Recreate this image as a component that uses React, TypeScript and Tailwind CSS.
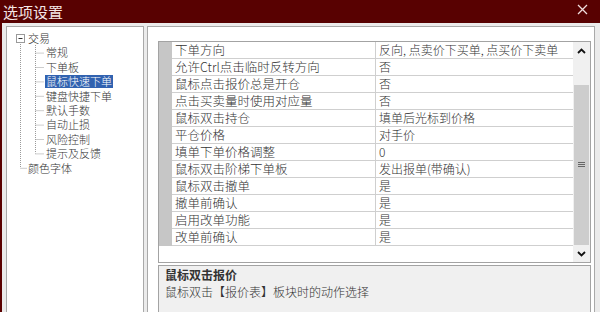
import React from 'react';

const rows: [string, string][] = [
  ['下单方向', '反向, 点卖价下买单, 点买价下卖单'],
  ['允许Ctrl点击临时反转方向', '否'],
  ['鼠标点击报价总是开仓', '否'],
  ['点击买卖量时使用对应量', '否'],
  ['鼠标双击持仓', '填单后光标到价格'],
  ['平仓价格', '对手价'],
  ['填单下单价格调整', '0'],
  ['鼠标双击阶梯下单板', '发出报单(带确认)'],
  ['鼠标双击撤单', '是'],
  ['撤单前确认', '是'],
  ['启用改单功能', '是'],
  ['改单前确认', '是'],
];

const children = ['常规', '下单板', '鼠标快速下单', '键盘快捷下单', '默认手数', '自动止损', '风险控制', '提示及反馈'];

const Chevron: React.FC<{ up?: boolean }> = ({ up }) => (
  <svg width="9" height="6" viewBox="0 0 9 6">
    <polyline
      points={up ? '1,5 4.5,1.5 8,5' : '1,1 4.5,4.5 8,1'}
      fill="none"
      stroke="#111"
      strokeWidth="1.8"
    />
  </svg>
);

const TreeLines = () => {
  const c = (i: number) => 11.2 + 14.4 * i;
  return (
    <svg className="absolute left-0 top-0 pointer-events-none" width="136" height="160">
      <g stroke="#9a9a9a" strokeWidth="1" strokeDasharray="1 1" fill="none">
        <line x1="13.5" y1="15" x2="13.5" y2={c(9)} />
        <line x1="13.5" y1={c(9) + 0.5} x2="20" y2={c(9) + 0.5} />
        <line x1="28.5" y1="18" x2="28.5" y2={c(8)} />
        {children.map((_, i) => (
          <line key={i} x1="28.5" y1={c(i + 1) + 0.5} x2="37" y2={c(i + 1) + 0.5} />
        ))}
      </g>
      <rect x="9.5" y="7.5" width="8" height="8" fill="#fff" stroke="#9a9a9a" />
      <line x1="11.5" y1="11.5" x2="15.5" y2="11.5" stroke="#333" />
    </svg>
  );
};

export default function App() {
  return (
    <div className="w-[600px] h-[312px] overflow-hidden flex flex-col bg-[#ebebeb] border-l-2 border-[#5a0000] font-['Noto_Sans_CJK_SC',sans-serif] font-light text-[#333]">
      {/* title bar */}
      <div className="h-[23px] shrink-0 bg-[#580101] flex items-center justify-between pl-[1px] pr-[12px]">
        <span className="text-[15px] leading-[23px] text-[#f4e6e6] font-normal">选项设置</span>
        <svg width="11" height="11" viewBox="0 0 11 11" className="-mt-[5px]">
          <path d="M1 1 L10 10 M10 1 L1 10" stroke="#f0dede" strokeWidth="1.3" />
        </svg>
      </div>

      <div className="flex-1 min-h-0 flex pt-[3px] pl-[4px] pr-[5px] gap-[3px]">
        {/* tree */}
        <div className="w-[138px] shrink-0 bg-white border border-b-0 border-[#a9a9a9] relative pt-[4px] text-[11px]">
          <TreeLines />
          <div className="h-[14.4px] leading-[14.4px] pl-[21px]">交易</div>
          {children.map((t) => (
            <div key={t} className="h-[14.4px] leading-[14.4px] pl-[38px]">
              {t === '鼠标快速下单' ? (
                <span className="inline-block bg-[#3162b0] text-white px-[1px] leading-[13px]">{t}</span>
              ) : (
                <span className="px-[1px]">{t}</span>
              )}
            </div>
          ))}
          <div className="h-[14.4px] leading-[14.4px] pl-[21px]">颜色字体</div>
        </div>

        {/* right panel */}
        <div className="flex-1 bg-white border border-b-0 border-[#a9a9a9] pl-[10px] pr-[3px] pt-[14px] flex flex-col">
          <div className="h-[222px] shrink-0 border border-[#a3a3a3] flex text-[12.5px]">
            <div className="flex-1 flex flex-col">
              {rows.map(([k, v]) => (
                <div key={k} className="h-[17px] flex">
                  <div className="w-[13px] bg-[#c6c6c6]" />
                  <div className="w-[204px] border-b border-r border-[#cfcfcf] pl-[3px] leading-[16px] whitespace-nowrap">
                    {k}
                  </div>
                  <div className="flex-1 border-b border-[#cfcfcf] pl-[3px] leading-[16px] whitespace-nowrap text-[12px]">
                    {v}
                  </div>
                </div>
              ))}
            </div>
            <div className="w-[17px] bg-[#f0f0f0] flex flex-col">
              <div className="h-[17px] flex items-center justify-center">
                <Chevron up />
              </div>
              <div className="h-[26px]" />
              <div className="h-[160px] mx-[1px] bg-[#cdcdcd] flex items-center justify-center">
                <svg width="7" height="6" viewBox="0 0 7 6">
                  <path d="M0 0.5 H7 M0 2.5 H7 M0 4.5 H7" stroke="#666" strokeWidth="1" />
                </svg>
              </div>
              <div className="h-[17px] flex items-center justify-center">
                <Chevron />
              </div>
            </div>
          </div>

          <div className="flex-1 mt-[2px] bg-[#f0f0f0] border border-b-0 border-[#a3a3a3] px-[6px] text-[12px]">
            <div className="font-bold leading-[17px]">鼠标双击报价</div>
            <div className="leading-[17px]">鼠标双击【报价表】板块时的动作选择</div>
          </div>
        </div>
      </div>
    </div>
  );
}
